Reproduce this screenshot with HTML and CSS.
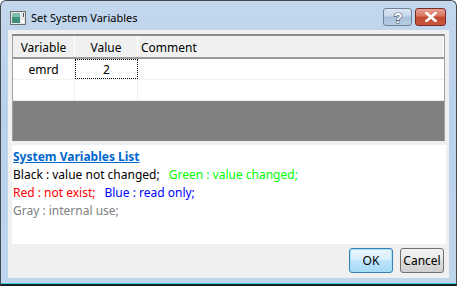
FILE: index.html
```html
<!DOCTYPE html>
<html lang="en">
<head>
  <meta charset="UTF-8" />
  <title>Set System Variables</title>
  <link rel="stylesheet" href="styles.css">
</head>
<body>
  <div class="window">
    <div class="titlebar">
      <svg class="app-icon" width="16" height="14" viewBox="0 0 16 14">
        <rect x="0.5" y="0.5" width="15" height="13" fill="#e8e8e8" stroke="#6d6d6d"/>
        <rect x="2" y="2" width="8" height="10" fill="#3f8f7a"/>
        <rect x="2" y="2" width="8" height="4" fill="#7cc0b0"/>
        <rect x="11" y="9" width="3" height="3" fill="#ffffff"/>
        <rect x="13" y="2" width="1" height="4" fill="#555"/>
      </svg>
      <span class="title">Set System Variables</span>
      <div class="caption-btns">
        <div class="cap-btn help">
          <svg width="12" height="14" viewBox="0 0 12 14">
            <text x="6" y="12.5" text-anchor="middle" class="help-glyph">?</text>
          </svg>
        </div>
        <div class="cap-btn close">
          <svg width="12" height="10" viewBox="0 0 12 10">
            <path d="M1.5 1 L10.5 9 M10.5 1 L1.5 9" stroke="#ffffff" stroke-width="2.6" stroke-linecap="square"/>
          </svg>
        </div>
      </div>
    </div>

    <div class="client">
      <div class="grid">
        <div class="row head">
          <div class="cell c1">Variable</div>
          <div class="cell c2">Value</div>
          <div class="cell c3 left">Comment</div>
        </div>
        <div class="row">
          <div class="cell c1">emrd</div>
          <div class="cell c2 focus">2</div>
          <div class="cell c3"></div>
        </div>
        <div class="row">
          <div class="cell c1"></div>
          <div class="cell c2"></div>
          <div class="cell c3"></div>
        </div>
        <div class="grid-empty"></div>
      </div>

      <div class="legend">
        <a class="legend-title">System Variables List</a>
        <div class="line"><span class="black">Black : value not changed;</span><span class="green gap">Green : value changed;</span></div>
        <div class="line"><span class="red">Red : not exist;</span><span class="blue gap">Blue : read only;</span></div>
        <div class="line"><span class="gray">Gray : internal use;</span></div>
      </div>

      <div class="buttons">
        <button class="btn ok">OK</button>
        <button class="btn">Cancel</button>
      </div>
    </div>
  </div>
</body>
</html>
```

FILE: styles.css
```css
html, body {
  margin: 0;
  padding: 0;
  background: #ffffff;
  font-family: "Noto Sans", "Liberation Sans", sans-serif;
  font-size: 12px;
}

.window {
  box-sizing: border-box;
  width: 457px;
  height: 286px;
  border: 1px solid #454b52;
  border-bottom: 2px solid #1c2026;
  border-radius: 6px 6px 0 0;
  background: linear-gradient(to bottom, #c3d7ed 0%, #b9d1ea 40%, #bfd5ec 100%);
  box-shadow: inset 0 -1px 0 #3ad0e6;
  display: flex;
  flex-direction: column;
}

.titlebar {
  height: 29px;
  display: flex;
  align-items: center;
  padding: 2px 2px 0 9px;
  box-sizing: border-box;
}

.app-icon {
  margin-right: 5px;
  margin-top: 2px;
}

.title {
  color: #000;
  font-size: 11px;
  margin-top: 1px;
  flex: 1;
}

.caption-btns {
  display: flex;
  gap: 3px;
  margin-right: 8px;
  margin-top: 1px;
}

.cap-btn {
  height: 16px;
  border-radius: 3px;
  display: flex;
  align-items: center;
  justify-content: center;
}

.help {
  width: 27px;
  border: 1px solid #6f8097;
  background: linear-gradient(to bottom, #dce7f4 0%, #c5d6ea 45%, #a9c0dc 50%, #b8cde5 100%);
}

.help-glyph {
  font-family: "Liberation Sans", sans-serif;
  font-weight: bold;
  font-size: 14px;
  fill: #ffffff;
  stroke: #4a5a70;
  stroke-width: 1.2px;
  paint-order: stroke;
}

.close {
  width: 29px;
  border: 1px solid #7a2b24;
  background: linear-gradient(to bottom, #e6a293 0%, #d8745f 45%, #c24a31 50%, #c9563b 100%);
}

.client {
  flex: 1;
  margin: 0 7px 6px 7px;
  background: #f0f0f0;
  padding: 4px 4px 0 4px;
  display: flex;
  flex-direction: column;
}

.grid {
  border-top: 2px solid #8a8a8a;
  border-right: 1px solid #a0a0a0;
  border-left: 1px solid #a0a0a0;
  background: #ffffff;
}

.row {
  display: flex;
  height: 20px;
  border-bottom: 1px solid #f0f0f0;
}

.row.head {
  height: 21px;
  background: #f0f0f0;
  border-bottom: 2px solid #999999;
}

.cell {
  box-sizing: border-box;
  display: flex;
  align-items: center;
  justify-content: center;
  border-right: 1px solid #f0f0f0;
  color: #000;
}

.head .cell {
  border-right: 1px solid #ffffff;
  padding-top: 1px;
}

.c1 { width: 62px; }
.c2 { width: 63px; }
.c3 { flex: 1; border-right: none; }
.cell.left { justify-content: flex-start; padding-left: 3px; }

.cell.focus {
  border: 1px dotted #000;
}

.grid-empty {
  height: 40px;
  background: #808080;
}

.legend {
  margin-top: 4px;
  background: #ffffff;
  height: 99px;
  padding: 3px 0 0 1px;
  box-sizing: border-box;
  margin-right: -1px;
}

.legend-title {
  display: block;
  color: #0066cc;
  font-weight: bold;
  text-decoration: underline;
  line-height: 18px;
}

.line {
  line-height: 18px;
}

.gap { margin-left: 9px; }
.black { color: #000000; }
.green { color: #00ff00; }
.red { color: #ff0000; }
.blue { color: #0000ff; }
.gray { color: #808080; }

.buttons {
  display: flex;
  justify-content: flex-end;
  gap: 7px;
  padding-top: 4px;
  padding-right: 1px;
}

.btn {
  width: 44px;
  height: 25px;
  font-family: "Noto Sans", "Liberation Sans", sans-serif;
  font-size: 12px;
  color: #000;
  border: 1px solid #707070;
  border-radius: 3px;
  background: linear-gradient(to bottom, #f2f2f2 0%, #ebebeb 45%, #dddddd 50%, #cfcfcf 100%);
  padding: 0;
}

.btn.ok {
  border-color: #3c7fb1;
  background: linear-gradient(to bottom, #eaf6fd 0%, #d9f0fc 45%, #bee6fd 50%, #a7d9f5 100%);
  box-shadow: inset 0 0 0 1px #9fe2f5;
}
```
